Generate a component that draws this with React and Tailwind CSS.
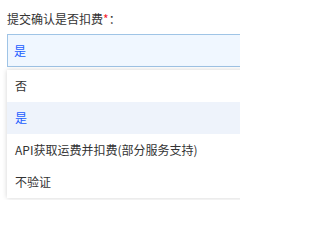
const options = ['否', '是', 'API获取运费并扣费(部分服务支持)', '不验证']

export default function App() {
  const selected = '是'

  return (
    <div className="w-[240px] h-[200px] overflow-hidden bg-white font-['Microsoft_YaHei','Noto_Sans_CJK_SC',sans-serif] text-[12px]">
      <div className="pl-[7px] pt-[11px] w-[300px]">
        {/* ── Label ───────────────────────────────────────────── */}
        <div className="h-[16px] leading-[16px] text-[#333]">
          提交确认是否扣费<span className="text-[#f5222d]">*</span>：
        </div>

        {/* ── Select box ──────────────────────────────────────── */}
        <div className="mt-[7px] h-[33px] border border-[#9fc4e6] bg-[#f0f7ff] flex items-center pl-[6px] text-[#1a5cff]">
          {selected}
        </div>

        {/* ── Dropdown ────────────────────────────────────────── */}
        <div className="mt-[3px] bg-white shadow-[0_0_5px_rgba(0,0,0,0.18)]">
          {options.map(opt => (
            <div
              key={opt}
              className={`h-[32px] flex items-center pl-[8px] ${
                opt === selected ? 'bg-[#eef3fb] text-[#1a5cff]' : 'text-[#333]'
              }`}
            >
              {opt}
            </div>
          ))}
        </div>
      </div>
    </div>
  )
}
